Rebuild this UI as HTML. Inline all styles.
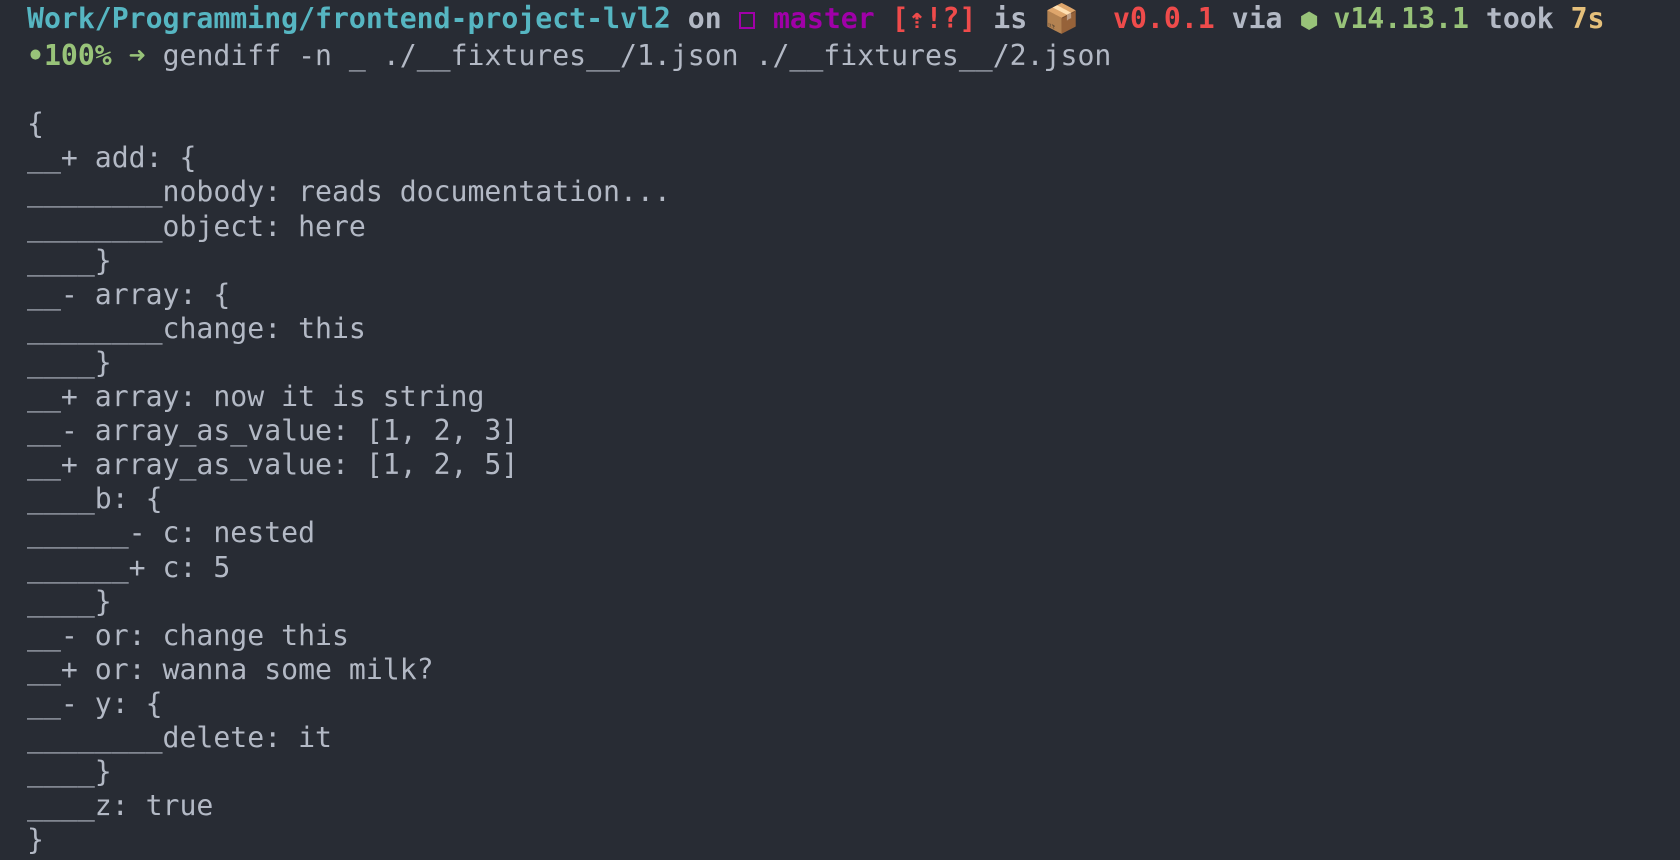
<!DOCTYPE html>
<html><head><meta charset="utf-8"><style>
html,body{margin:0;padding:0;background:#282c34;width:1680px;height:860px;overflow:hidden}
pre{margin:0;position:absolute;left:27px;top:2px;font-family:"DejaVu Sans Mono","Liberation Mono",monospace;font-size:28.15px;line-height:34.1px;color:#b3b9c5}
.c{color:#56b6c2;font-weight:bold}.p{color:#a000a8;font-weight:bold}.r{color:#ef4b4b;font-weight:bold}.g{color:#98c379;font-weight:bold}.y{color:#e5c07b;font-weight:bold}.b{font-weight:bold}
.sq{display:inline-block;width:0.6em;height:0.6em;box-sizing:border-box;border:2px solid #a000a8;vertical-align:-1px;margin-right:0.02em}
.hx{display:inline-block;width:0.6em;text-align:center;font-size:22px;font-weight:normal}
</style></head><body><pre><span class="c">Work/Programming/frontend-project-lvl2</span> <span class="b">on</span> <span class="p"><span class="sq"></span> master</span> <span class="r">[⇡!?]</span> <span class="b">is</span> 📦  <span class="r">v0.0.1</span> <span class="b">via</span> <span class="g"><span class="hx" style="width:17px">⬢</span> v14.13.1</span> <span class="b">took</span> <span class="y">7s</span>
<span class="g">•100%</span> <span class="g">➜</span> gendiff -n _ ./__fixtures__/1.json ./__fixtures__/2.json

{
__+ add: {
________nobody: reads documentation...
________object: here
____}
__- array: {
________change: this
____}
__+ array: now it is string
__- array_as_value: [1, 2, 3]
__+ array_as_value: [1, 2, 5]
____b: {
______- c: nested
______+ c: 5
____}
__- or: change this
__+ or: wanna some milk?
__- y: {
________delete: it
____}
____z: true
}</pre></body></html>
